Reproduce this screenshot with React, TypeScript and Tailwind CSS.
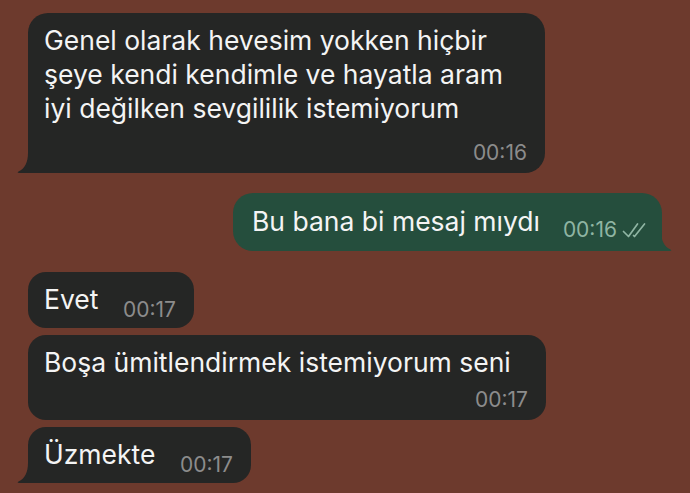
import React from 'react'

const font = { fontFamily: 'Inter, "Noto Sans", sans-serif' }

function TailLeft() {
  return (
    <svg className="absolute left-[-11px] bottom-0" width="16" height="20" viewBox="0 0 16 20">
      <path d="M11 0 C11 9 8 15.5 1.5 18.6 Q0 19.4 1 19.8 Q2.5 20 4 20 L16 20 L16 0 Z" fill="#252625" />
    </svg>
  )
}

function TailRight() {
  return (
    <svg className="absolute right-[-10px] bottom-0" width="16" height="20" viewBox="0 0 16 20">
      <path d="M5 0 C5 9 8 15.5 14.5 18.6 Q16 19.4 15 19.8 Q13.5 20 12 20 L0 20 L0 0 Z" fill="#254e3d" />
    </svg>
  )
}

function Checks() {
  return (
    <svg width="26" height="17" viewBox="0 0 26 17" className="ml-[5px] mb-[1px]" fill="none">
      <path d="M1.5 9.5 L6.5 14.5 L15.5 2" stroke="#8fb5a3" strokeWidth="1.7" strokeLinecap="round" strokeLinejoin="round" />
      <path d="M11.5 13.5 L12.5 14.5 L22.5 2" stroke="#8fb5a3" strokeWidth="1.7" strokeLinecap="round" strokeLinejoin="round" />
    </svg>
  )
}

export default function App() {
  return (
    <div className="w-[690px] h-[493px] bg-[#6d3a2d] pt-[13px] pl-[28px] flex flex-col overflow-hidden" style={font}>
      {/* long incoming message */}
      <div className="relative w-[517px] rounded-[20px] rounded-bl-none bg-[#252625] pl-[16px] pr-[18px] pt-[10px] pb-[9px]">
        <div className="text-[26.5px] leading-[34px] text-[#f4f4f4] whitespace-nowrap">
          <div>Genel olarak hevesim yokken hiçbir</div>
          <div>şeye kendi kendimle ve hayatla aram</div>
          <div>iyi değilken sevgililik istemiyorum</div>
        </div>
        <div className="mt-[17px] text-right text-[21px] leading-[22px] text-[#8c8c8c]">00:16</div>
        <TailLeft />
      </div>

      {/* outgoing */}
      <div className="mt-[20px] self-start ml-[205px] relative w-[429px] rounded-[20px] rounded-br-none bg-[#254e3d] pl-[19px] pr-[14px] pt-[11px] pb-[13px] flex items-end justify-between">
        <span className="text-[26.5px] leading-[34px] text-[#f4f4f4] whitespace-nowrap">Bu bana bi mesaj mıydı</span>
        <span className="flex items-end -mb-[2px]">
          <span className="text-[21px] leading-none text-[#8fb5a3]">00:16</span>
          <Checks />
        </span>
        <TailRight />
      </div>

      <div className="mt-[21px] w-[166px] rounded-[18px] bg-[#252625] pl-[16px] pr-[18px] pt-[10px] pb-[12px] flex items-end justify-between">
        <span className="text-[26.5px] leading-[34px] text-[#f4f4f4]">Evet</span>
        <span className="text-[21px] leading-none text-[#8c8c8c] -mb-[4px]">00:17</span>
      </div>

      <div className="mt-[7px] w-[518px] rounded-[18px] bg-[#252625] pl-[16px] pr-[18px] pt-[10px] pb-[9px]">
        <div className="text-[26.5px] leading-[34px] text-[#f4f4f4] whitespace-nowrap">Boşa ümitlendirmek istemiyorum seni</div>
        <div className="mt-[10px] text-right text-[21px] leading-[22px] text-[#8c8c8c]">00:17</div>
      </div>

      <div className="mt-[7px] relative w-[223px] rounded-[18px] rounded-bl-none bg-[#252625] pl-[16px] pr-[18px] pt-[10px] pb-[12px] flex items-end justify-between">
        <span className="text-[26.5px] leading-[34px] text-[#f4f4f4]">Üzmekte</span>
        <span className="text-[21px] leading-none text-[#8c8c8c] -mb-[4px]">00:17</span>
        <TailLeft />
      </div>
    </div>
  )
}
